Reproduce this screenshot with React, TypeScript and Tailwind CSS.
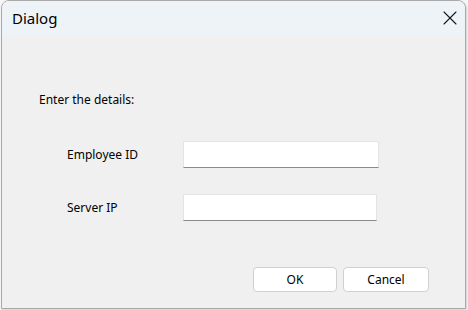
import { X } from 'lucide-react';

export default function App() {
  return (
    <div className="w-[468px] h-[310px] bg-[#f6f6f6] pl-[1px]" style={{ fontFamily: '"Noto Sans", "Open Sans", sans-serif' }}>
      <div className="w-[465px] h-[309px] rounded-t-lg border border-[#a9a9a9] bg-[#f0f0f0] overflow-hidden flex flex-col shadow-[1px_1px_2px_rgba(0,0,0,0.15)]">
        <div className="h-[35px] bg-[#eef3f8] flex items-center justify-between pl-[10px] pr-[3px] shrink-0">
          <span className="text-[15px] text-black">Dialog</span>
          <X className="w-[24px] h-[24px] text-[#1a1a1a] -mt-[2px]" strokeWidth={1.1} />
        </div>

        <div className="flex-1 flex flex-col text-[12px] text-black">
          <div className="pl-[37px] pt-[55px]">Enter the details:</div>

          <div className="pl-[65px] pt-[32px] flex items-center">
            <span className="w-[116px]">Employee ID</span>
            <div className="w-[196px] h-[27px] bg-white border border-[#e4e4e4] border-b-[#8a8a8a]" />
          </div>

          <div className="pl-[65px] pt-[26px] flex items-center">
            <span className="w-[116px]">Server IP</span>
            <div className="w-[194px] h-[27px] bg-white border border-[#e4e4e4] border-b-[#8a8a8a]" />
          </div>

          <div className="flex justify-end gap-[6px] pr-[36px] pt-[46px]">
            <button className="w-[84px] h-[25px] rounded bg-white border border-[#d0d0d0] text-[12px]">OK</button>
            <button className="w-[86px] h-[25px] rounded bg-white border border-[#d0d0d0] text-[12px]">Cancel</button>
          </div>
        </div>
      </div>
    </div>
  );
}
